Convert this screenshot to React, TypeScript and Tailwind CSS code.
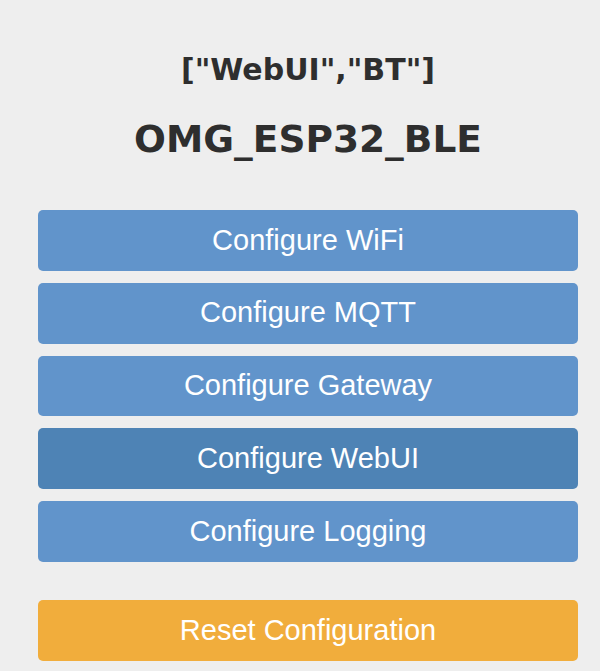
import React from "react";

export default function App() {
  const items = [
    { label: "Configure WiFi", dark: false },
    { label: "Configure MQTT", dark: false },
    { label: "Configure Gateway", dark: false },
    { label: "Configure WebUI", dark: true },
    { label: "Configure Logging", dark: false },
  ];
  return (
    <div className="min-h-[671px] w-[600px] bg-[#eeeeee] pl-[38px] pt-[50px] font-['Liberation_Sans',Arial,sans-serif]">
      <div className="flex w-[540px] flex-col">
        <h2 className="text-center font-['DejaVu_Sans',sans-serif] text-[30px] font-bold leading-[40px] text-[#2e2e2e]">
          ["WebUI","BT"]
        </h2>
        <h1 className="mt-[26px] text-center font-['DejaVu_Sans',sans-serif] text-[37.5px] font-bold leading-[46px] text-[#2e2e2e]">
          OMG_ESP32_BLE
        </h1>
        <div className="mt-[48px] flex flex-col gap-[12px]">
          {items.map((it) => (
            <button
              key={it.label}
              className={`h-[60.8px] w-full rounded-[5px] text-[29px] text-white ${
                it.dark ? "bg-[#4e83b5]" : "bg-[#6194cb]"
              }`}
            >
              {it.label}
            </button>
          ))}
        </div>
        <button className="mt-[38px] h-[60.8px] w-full rounded-[5px] bg-[#f1ad3c] text-[29px] text-white">
          Reset Configuration
        </button>
      </div>
    </div>
  );
}
